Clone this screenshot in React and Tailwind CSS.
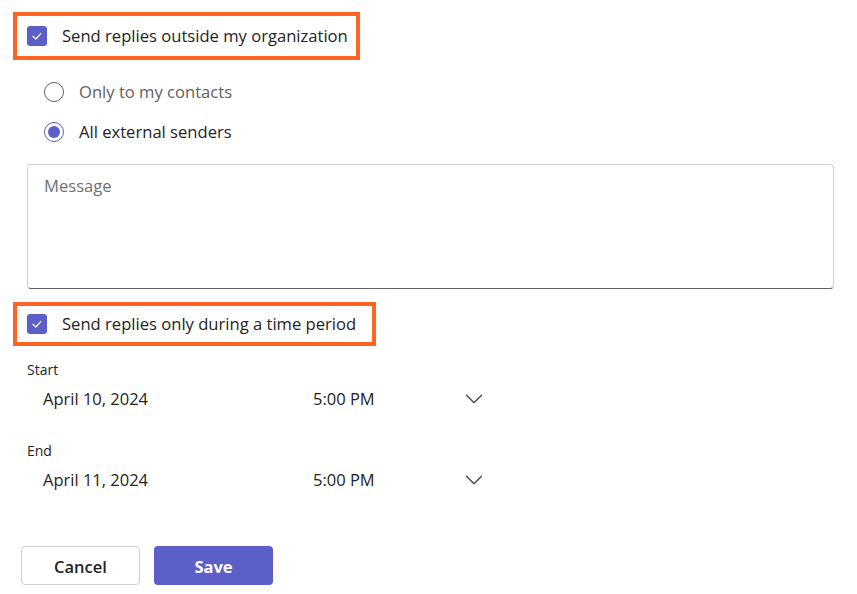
import { ChevronDown } from 'lucide-react'

const Check = ({ checked = true }) => (
  <div className="w-5 h-5 rounded-[3px] bg-[#5b5fc7] flex items-center justify-center shrink-0">
    {checked && (
      <svg width="14" height="14" viewBox="0 0 14 14" fill="none">
        <path d="M3 7.2 L5.9 10 L11 4.4" stroke="white" strokeWidth="1.2" strokeLinecap="round" strokeLinejoin="round" />
      </svg>
    )}
  </div>
)

const Radio = ({ checked, label }) => (
  <div className="flex items-center gap-[15px] h-10">
    <div className={`w-5 h-5 rounded-full border flex items-center justify-center ${checked ? 'border-[#5b5fc7]' : 'border-[#616161]'}`}>
      {checked && <div className="w-3 h-3 rounded-full bg-[#5b5fc7]" />}
    </div>
    <span className={checked ? 'text-[#242424]' : 'text-[#616161]'}>{label}</span>
  </div>
)

const DateRow = ({ label, date, time }) => (
  <div className="flex flex-col">
    <div className="text-[14px] text-[#242424] leading-5">{label}</div>
    <div className="flex items-center h-[38px] pl-4">
      <span className="w-[270px] text-[16.5px] text-[#242424]">{date}</span>
      <span className="w-[146px] text-[16.5px] text-[#242424]">{time}</span>
      <ChevronDown className="w-[30px] h-[30px] text-[#424242]" strokeWidth={1} />
    </div>
  </div>
)

const App = () => {
  return (
    <div className="w-[857px] h-[594px] bg-white text-[16.6px] text-[#242424] overflow-hidden" style={{ fontFamily: '"Open Sans", "Noto Sans", sans-serif' }}>
      <div className="pt-3 pl-[13px]">
        <div className="inline-flex items-center gap-[15px] h-12 pl-[10px] pr-2 border-4 border-[#ff6422]">
          <Check />
          <span>Send replies outside my organization</span>
        </div>
      </div>

      <div className="pl-[44px] pt-[12px] flex flex-col">
        <Radio label="Only to my contacts" />
        <Radio checked label="All external senders" />
      </div>

      <div className="mx-[27px] mt-3 w-[807px] h-[125px] border border-[#d1d1d1] border-b-[#616161] rounded-[4px] px-4 pt-[9px]">
        <span className="text-[#707070]">Message</span>
      </div>

      <div className="pt-[13px] pl-[13px]">
        <div className="inline-flex items-center gap-[15px] h-11 pl-[10px] pr-[16px] border-4 border-[#ff6422]">
          <Check />
          <span>Send replies only during a time period</span>
        </div>
      </div>

      <div className="pl-[27px] pt-[14px] flex flex-col gap-[23px]">
        <DateRow label="Start" date="April 10, 2024" time="5:00 PM" />
        <DateRow label="End" date="April 11, 2024" time="5:00 PM" />
      </div>

      <div className="pl-[21px] pt-[47px] flex gap-[14px]">
        <button className="w-[119px] h-[39px] pt-[3px] rounded-[4px] border border-[#d1d1d1] bg-white text-[#242424] text-[16.5px] font-semibold">Cancel</button>
        <button className="w-[119px] h-[39px] pt-[3px] rounded-[4px] bg-[#5b5fc7] text-white text-[16.5px] font-bold">Save</button>
      </div>
    </div>
  )
}

export default App
